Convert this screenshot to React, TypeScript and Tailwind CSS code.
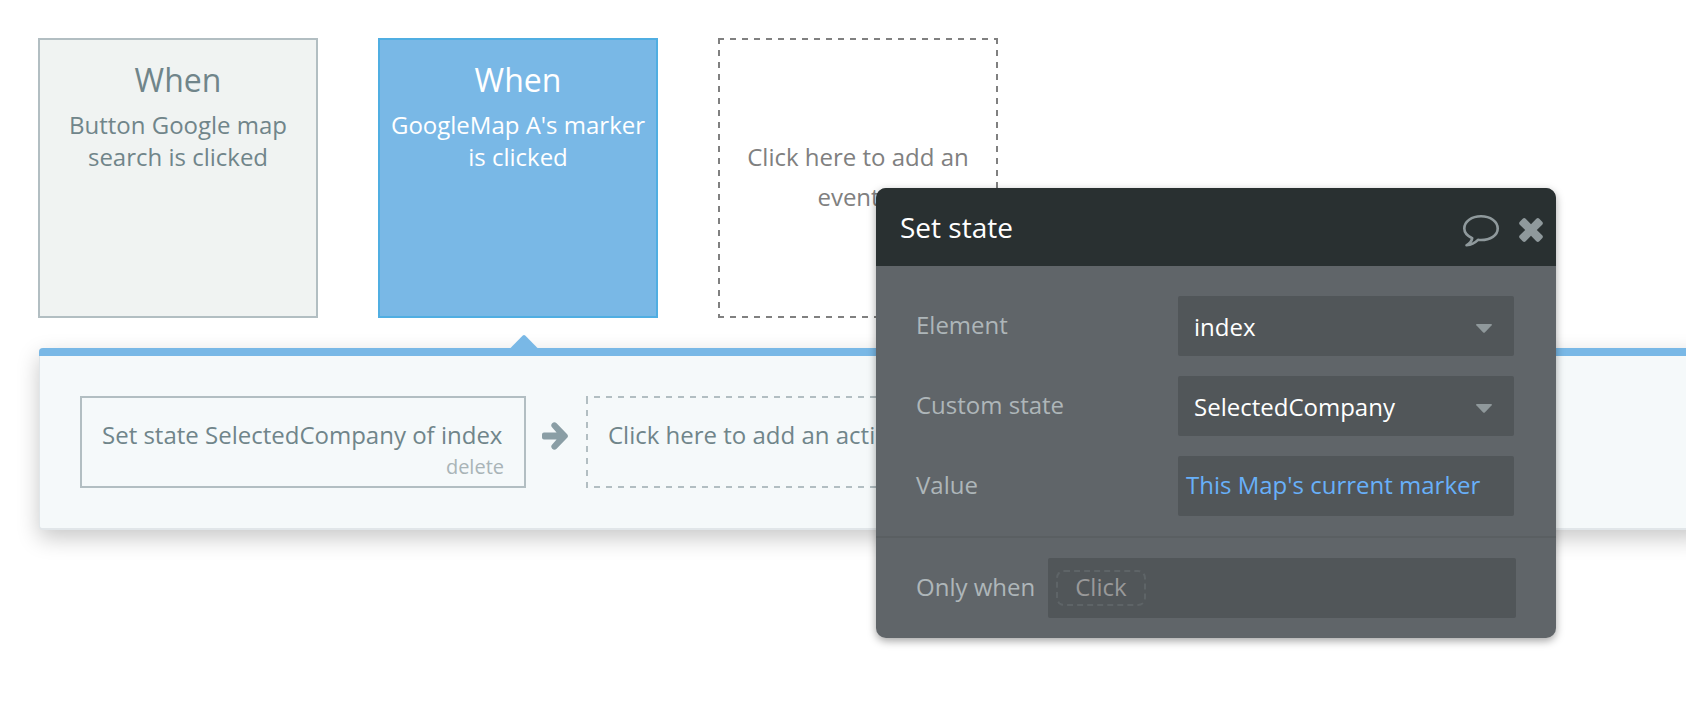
import React from "react";

function EventCard({ text, active }: { text: string; active?: boolean }) {
  const tone = active
    ? "border-[#50aee2] bg-[#79b8e6] text-white"
    : "border-[#b2bec2] bg-[#f0f3f2] text-[#70858a]";
  return (
    <button className={`flex size-[280px] flex-col items-center border-2 px-2 pt-[18px] ${tone}`}>
      <span className="text-[32px] leading-[44px]">When</span>
      <span className="mt-[7px] text-2xl leading-8">{text}</span>
    </button>
  );
}

function ArrowIcon() {
  return (
    <svg viewBox="0 0 26 28" className="h-7 w-[26px]" fill="#8a9ea5" aria-hidden="true">
      <path d="M10.200 1.200Q12.400 -.8 14.600 1.200L25.200 12.200Q26.700 14 25.200 15.800L14.600 26.800Q12.400 28.800 10.200 26.800Q8.200 24.600 10.200 22.400L14.600 17.500H2Q0 17.500 0 15.500V12.500Q0 10.500 2 10.500H14.600L10.200 5.600Q8.200 3.400 10.200 1.200Z" />
    </svg>
  );
}

function SelectField({ id, label, value }: { id: string; label: string; value: string }) {
  return (
    <div className="flex items-center justify-between">
      <label htmlFor={id} className="pb-0.5 text-[#aeb6b9]">{label}</label>
      <div className="relative w-[336px]">
        <select id={id} defaultValue={value} className="h-[60px] w-full appearance-none rounded-xs bg-[#515659] px-4 pt-0.5 text-white">
          <option>{value}</option>
        </select>
        <svg viewBox="0 0 16 9" className="pointer-events-none absolute top-7 right-[22px] h-[9px] w-4" fill="#8f989b" aria-hidden="true">
          <path d="M.8 0H15.200Q16.300 .3 15.700 1.200L8.800 8.500Q8 9.200 7.200 8.500L.3 1.200Q-.3 .3 .8 0Z" />
        </svg>
      </div>
    </div>
  );
}

export default function App() {
  return (
    <main className="relative min-h-screen overflow-hidden bg-white pt-[38px] pb-16 pl-[38px] font-['Open_Sans',sans-serif] text-2xl">
      <section aria-label="Events" className="flex gap-[60px]">
        <EventCard text="Button Google map search is clicked" />
        <EventCard text="GoogleMap A's marker is clicked" active />
        <button className="flex size-[280px] items-center justify-center px-[22px] pb-0.5 leading-10 text-[#808080] [background:linear-gradient(90deg,#808080_50%,transparent_50%)_0_0/12px_2px_repeat-x,linear-gradient(90deg,#808080_50%,transparent_50%)_0_100%/12px_2px_repeat-x,linear-gradient(#808080_50%,transparent_50%)_0_0/2px_12px_repeat-y,linear-gradient(#808080_50%,transparent_50%)_100%_0/2px_12px_repeat-y]">
          Click here to add an event...
        </button>
      </section>

      <section aria-label="Actions" className="relative mt-[30px] -mr-5 ml-px rounded border-b-2 border-l border-[#e1e6e9] bg-[#f5f9fa] shadow-[0_8px_22px_rgba(0,0,0,0.22)]">
        <svg viewBox="0 0 28 14" className="absolute -top-[13px] left-[470px] h-3.5 w-7" fill="#79b8e6" aria-hidden="true">
          <path d="M0 13.500L12.800 .6Q14 -.4 15.200 .6L28 13.500V14H0Z" />
        </svg>
        <div className="-ml-px h-2 rounded-tl bg-[#79b8e6]" />
        <div className="flex items-center px-10 py-10">
          <div className="flex h-[92px] w-[446px] flex-col items-start border-2 border-[#b2bec2] px-5 pt-[19px]">
            <button className="leading-9 whitespace-nowrap text-[#70858a]">Set state SelectedCompany of index</button>
            <button className="mt-0.5 self-end text-xl leading-6 text-[#a9b4b7]">delete</button>
          </div>
          <div className="mr-[18px] ml-4 pb-3">
            <ArrowIcon />
          </div>
          <button className="flex h-[92px] px-[22px] pt-[21px] leading-9 text-[#70858a] [background:linear-gradient(90deg,#b2bec2_50%,transparent_50%)_8px_0/12px_2px_repeat-x,linear-gradient(90deg,#b2bec2_50%,transparent_50%)_8px_100%/12px_2px_repeat-x,linear-gradient(#b2bec2_50%,transparent_50%)_0_2px/2px_12px_repeat-y,linear-gradient(#b2bec2_50%,transparent_50%)_100%_2px/2px_12px_repeat-y]">
            Click here to add an action...
          </button>
        </div>
      </section>

      <section role="dialog" aria-label="Set state" className="absolute top-[188px] left-[876px] w-[680px] rounded-[10px] bg-[#606569] shadow-[0_3px_8px_rgba(0,0,0,0.36)]">
        <header className="flex h-[78px] items-center rounded-t-[10px] bg-[#293031] pr-[13px] pl-6">
          <h1 className="flex-1 pt-0.5 text-[28px] text-white">Set state</h1>
          <button aria-label="Comment" className="mr-5 pt-2">
            <svg viewBox="0 0 36 32" className="h-8 w-9" fill="none" stroke="#8f999c" strokeWidth="2.600" strokeLinejoin="round" aria-hidden="true">
              <path d="M9.200 23.200C4.500 21 1.300 17.800 1.300 13.500C1.300 6.500 8.700 1.300 18 1.300S34.700 6.500 34.700 13.500S27.300 25 18 25C16.900 25 16 25 15 24.800C12 27.800 8 29.800 3.500 30.300C6.800 28.200 8.800 26 9.200 23.200Z" />
            </svg>
          </button>
          <button aria-label="Close" className="pt-[5px]">
            <svg viewBox="0 0 24 24" className="size-6" fill="#8f999c" aria-hidden="true">
              <path d="M3.700 .8Q5.200 -.6 6.700 .8L12 6.200L17.300 .8Q18.800 -.6 20.300 .8L23.200 3.700Q24.600 5.200 23.200 6.700L17.800 12L23.200 17.300Q24.600 18.800 23.200 20.300L20.300 23.200Q18.800 24.600 17.300 23.200L12 17.800L6.700 23.200Q5.200 24.600 3.700 23.200L.8 20.300Q-.6 18.800 .8 17.300L6.200 12L.8 6.700Q-.6 5.200 .8 3.700Z" />
            </svg>
          </button>
        </header>
        <div className="flex flex-col gap-5 border-b-2 border-[#5a5f62] pt-[30px] pr-[42px] pb-5 pl-10">
          <SelectField id="element" label="Element" value="index" />
          <SelectField id="state" label="Custom state" value="SelectedCompany" />
          <div className="flex items-center justify-between">
            <label htmlFor="value" className="pb-0.5 text-[#aeb6b9]">Value</label>
            <button id="value" className="h-[60px] w-[336px] rounded-xs bg-[#515659] px-2 pb-0.5 text-left text-[#68b0f9]">This Map's current marker</button>
          </div>
        </div>
        <div className="flex items-center gap-[13px] px-10 py-5">
          <label htmlFor="only-when" className="pb-0.5 text-[#aeb6b9]">Only when</label>
          <div className="flex h-[60px] flex-1 items-center rounded-xs bg-[#515659] px-2">
            <button id="only-when" className="h-9 rounded-lg border-2 border-dashed border-[#5e6467] px-[17px] pb-0.5 leading-[30px] text-[#999]">Click</button>
          </div>
        </div>
      </section>
    </main>
  );
}
